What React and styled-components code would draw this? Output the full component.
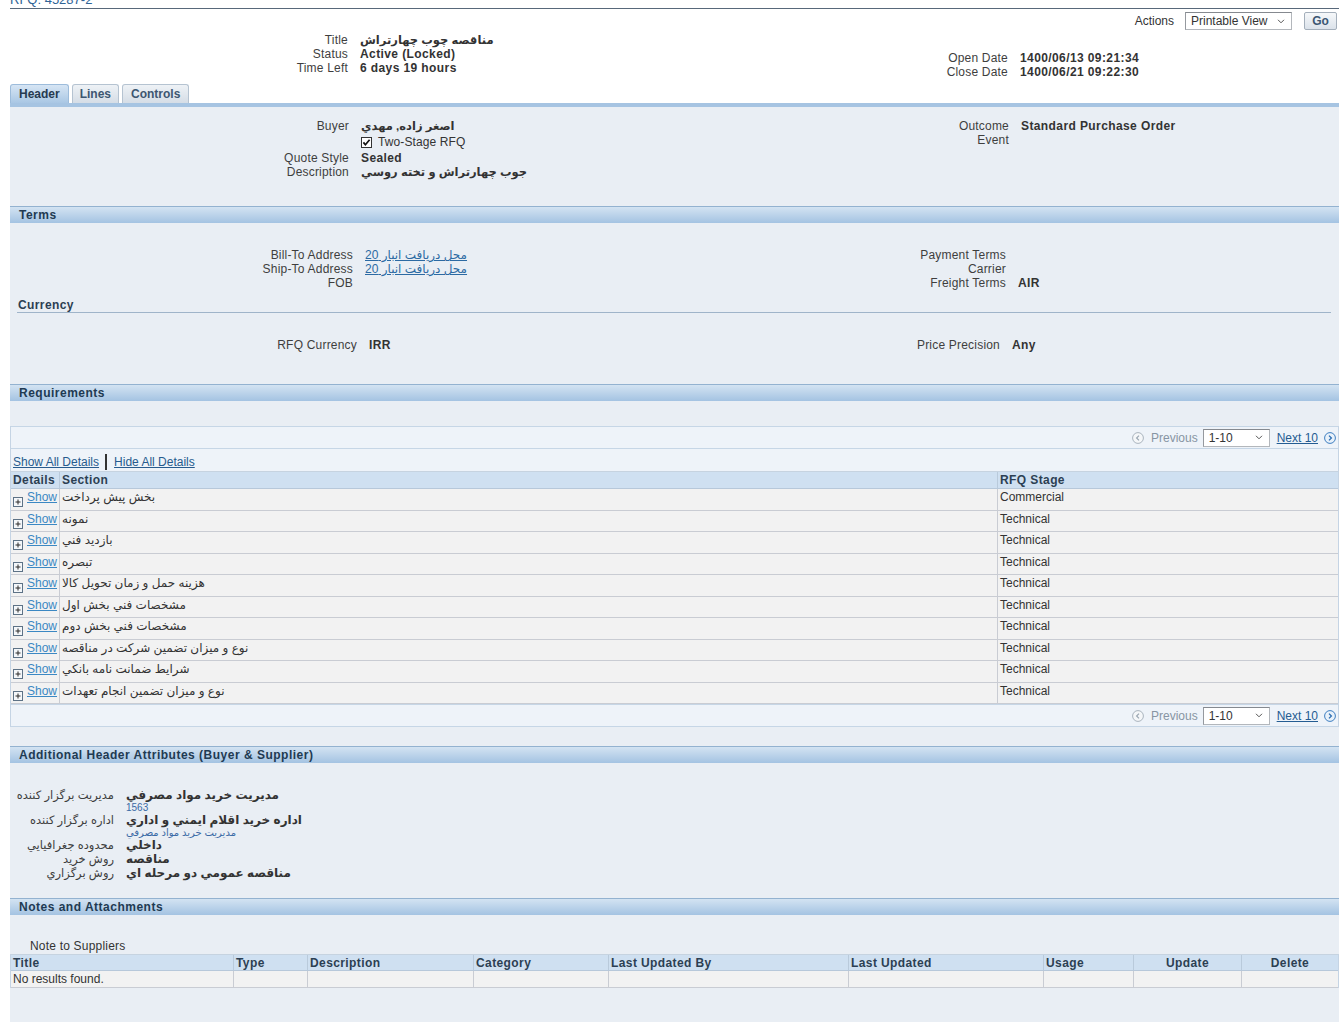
import React from "react";
import styled, { createGlobalStyle } from "styled-components";

const GlobalStyle = createGlobalStyle`
  html, body { margin: 0; padding: 0; background: #ffffff; }
  body {
    font-family: "Liberation Sans", "DejaVu Sans", Arial, sans-serif;
    font-size: 12px;
    color: #333;
    overflow: hidden;
  }
`;

const Fa = styled.span`
  letter-spacing: 0;
  font-size: ${(p) => (p.$size ? `${p.$size}px` : "inherit")};
`;

const Page = styled.div`
  width: 1329px;
  margin-left: 10px;
`;

const PageTitle = styled.div`
  margin-top: -8px;
  height: 17px;
  box-sizing: border-box;
  border-bottom: 1px solid #58687a;
  font-size: 13px;
  line-height: 16px;
  color: #2f6497;
`;

const ActionsBar = styled.div`
  display: flex;
  justify-content: flex-end;
  align-items: center;
  height: 18px;
  margin-top: 3px;
  padding-right: 2px;
`;

const ActionsLabel = styled.span`
  color: #333;
  margin-right: 11px;
`;

const SelectBox = styled.div`
  display: flex;
  align-items: center;
  justify-content: space-between;
  width: ${(p) => p.$w}px;
  height: 18px;
  box-sizing: border-box;
  border: 1px solid #b3b7bc;
  border-top-color: #85898f;
  border-left-color: #95999f;
  background: #fff;
  padding: 0 6px 0 5px;
  color: #333;
  font-size: 12px;
  margin: 0 ${(p) => p.$mr || 0}px 0 ${(p) => p.$ml || 0}px;
`;

const GoButton = styled.div`
  margin-left: 12px;
  width: 33px;
  height: 18px;
  box-sizing: border-box;
  border: 1px solid #a4afbb;
  border-radius: 2px;
  background: linear-gradient(#f6f8fa, #dbe2ea);
  font-weight: bold;
  font-size: 12px;
  line-height: 16px;
  text-align: center;
  color: #3b5672;
`;

const TwoCol = styled.div`
  display: flex;
  padding-top: ${(p) => p.$top || 0}px;
  padding-bottom: ${(p) => p.$bottom || 0}px;
  margin-top: ${(p) => p.$mt || 0}px;
`;

const Col = styled.div`
  width: ${(p) => (p.$w ? `${p.$w}px` : "auto")};
  flex: ${(p) => (p.$w ? "none" : "1")};
  padding-top: ${(p) => p.$offset || 0}px;
`;

const Fields = styled.div`
  display: grid;
  grid-template-columns: ${(p) => p.$label}px max-content;
  column-gap: 12px;
  line-height: 14px;
  align-content: start;
`;

const Label = styled.div`
  text-align: right;
  color: #3e3e3e;
  white-space: nowrap;
  height: 14px;
  letter-spacing: 0.2px;
`;

const Value = styled.div`
  font-weight: bold;
  color: #333;
  white-space: nowrap;
  height: 14px;
  letter-spacing: 0.4px;
`;

const CheckValue = styled.div`
  display: flex;
  align-items: center;
  gap: 6px;
  height: 18px;
  color: #333;
  letter-spacing: 0.1px;
`;

const SubNote = styled.div`
  grid-column: 2;
  font-size: 10px;
  line-height: 11px;
  height: 11px;
  color: #3a6aa6;
  white-space: nowrap;
`;

const AddrLink = styled.a`
  color: #2c6aa3;
  text-decoration: underline;
  font-weight: normal;
  letter-spacing: 0;
`;

const TabBar = styled.div`
  display: flex;
  align-items: flex-end;
  gap: 3px;
  margin-top: 5px;
  height: 19px;
  border-bottom: 4px solid #a6c4e2;
`;

const Tab = styled.div`
  height: 19px;
  box-sizing: border-box;
  padding: 0 ${(p) => p.$pad || 8}px;
  line-height: 18px;
  font-weight: bold;
  border: 1px solid ${(p) => (p.$active ? "#9dbcdb" : "#b5c3d1")};
  border-bottom: none;
  border-radius: 3px 3px 0 0;
  background: ${(p) =>
    p.$active
      ? "linear-gradient(#d6e5f4, #a9c7e4)"
      : "linear-gradient(#eef2f6, #d5dde6)"};
  color: ${(p) => (p.$active ? "#263a50" : "#3d5671")};
`;

const Content = styled.div`
  background: #e9eef4;
`;

const Section = styled.div`
  padding-top: ${(p) => p.$top}px;
  padding-bottom: ${(p) => p.$bottom}px;
`;

const SectionBar = styled.div`
  height: 17px;
  box-sizing: border-box;
  border-top: 1px solid #93b2d0;
  background: linear-gradient(#d3e3f2, #a4c3e2);
  padding-left: 9px;
  line-height: 16px;
  font-weight: bold;
  letter-spacing: 0.5px;
  color: #213a52;
`;

const SubHeader = styled.div`
  margin: 7px 8px 0 7px;
  padding: 1px 0 0 1px;
  line-height: 14px;
  font-weight: bold;
  letter-spacing: 0.4px;
  color: #2c3e52;
  border-bottom: 1px solid #9fb4c9;
`;

const TableBox = styled.div`
  background: #eef3f9;
  border-left: 1px solid #c5d4e4;
  border-right: 1px solid #c5d4e4;
`;

const PagerRow = styled.div`
  display: flex;
  justify-content: flex-end;
  align-items: center;
  height: 23px;
  box-sizing: border-box;
  border-top: 1px solid #c6d6e6;
  border-bottom: 1px solid #c6d6e6;
  padding-right: 2px;
  color: #8795a3;
`;

const PagerText = styled.span`
  margin-left: 7px;
`;

const PagerLink = styled.a`
  color: #245c92;
  text-decoration: underline;
  margin-right: 6px;
`;

const DetailLinks = styled.div`
  display: flex;
  align-items: center;
  height: 22px;
  padding: 4px 0 0 2px;
  box-sizing: border-box;
`;

const PlainLink = styled.a`
  color: #275b8e;
  text-decoration: underline;
`;

const LinkSep = styled.span`
  display: inline-block;
  width: 2px;
  height: 16px;
  background: #333;
  margin: 0 7px 0 6px;
`;

const GridRow = styled.div`
  display: grid;
  grid-template-columns: ${(p) => p.$cols};
  height: ${(p) => p.$h}px;
  box-sizing: border-box;
  background: ${(p) => (p.$head ? "#cfe0f1" : "#f2f2f2")};
  border-bottom: 1px solid ${(p) => (p.$head ? "#b7c8da" : "#c9ccd3")};
  border-top: ${(p) => (p.$top ? "1px solid #c6d3e0" : "none")};
`;

const Cell = styled.div`
  padding: 1px 2px 0;
  line-height: 14px;
  white-space: nowrap;
  overflow: hidden;
  text-align: ${(p) => p.$align || "left"};
  font-weight: ${(p) => (p.$head ? "bold" : "normal")};
  letter-spacing: ${(p) => (p.$head ? "0.4px" : "0")};
  color: ${(p) => (p.$head ? "#2c3f53" : "#333")};
  border-right: ${(p) =>
    p.$last ? "none" : `1px solid ${p.$head ? "#b9cadb" : "#c9ccd3"}`};
  display: ${(p) => (p.$flex ? "flex" : "block")};
  align-items: flex-start;
`;

const ShowLink = styled.a`
  color: #3b88c3;
  text-decoration: underline;
  margin-left: 4px;
`;

const PlusWrap = styled.span`
  display: inline-flex;
  margin-top: 7px;
`;

const NoteLabel = styled.div`
  padding-left: 20px;
  line-height: 14px;
  color: #333;
  height: 15px;
  letter-spacing: 0.2px;
`;

const NotesBox = styled.div`
  border-left: 1px solid #c5d4e4;
  border-right: 1px solid #c5d4e4;
`;

/* ---------- icons ---------- */

const Chevron = () => (
  <svg width="8" height="5" viewBox="0 0 8 5">
    <path d="M1 0.8 L4 3.8 L7 0.8" fill="none" stroke="#555" strokeWidth="1" />
  </svg>
);

const CheckIcon = () => (
  <svg width="11" height="11" viewBox="0 0 11 11">
    <rect x="0.5" y="0.5" width="10" height="10" fill="#fff" stroke="#333" />
    <path d="M2.4 5.4 L4.4 7.8 L8.6 2.8" fill="none" stroke="#111" strokeWidth="1.7" />
  </svg>
);

const PlusIcon = () => (
  <svg width="10" height="10" viewBox="0 0 10 10">
    <rect x="0.5" y="0.5" width="9" height="9" fill="#f4f7fa" stroke="#5d7286" />
    <path d="M2.5 5 H7.5 M5 2.5 V7.5" stroke="#2a2a2a" strokeWidth="1" />
  </svg>
);

const PrevIcon = () => (
  <svg width="12" height="12" viewBox="0 0 12 12">
    <circle cx="6" cy="6" r="5.4" fill="#f5f7f9" stroke="#aab4be" />
    <path d="M7 3.6 L4.6 6 L7 8.4" fill="none" stroke="#9aa6b2" strokeWidth="1.2" />
  </svg>
);

const NextIcon = () => (
  <svg width="12" height="12" viewBox="0 0 12 12">
    <circle cx="6" cy="6" r="5.4" fill="#e8f1fa" stroke="#3e7ec0" />
    <path d="M5 3.6 L7.4 6 L5 8.4" fill="none" stroke="#2b6db2" strokeWidth="1.3" />
  </svg>
);

/* ---------- data ---------- */

const requirements = [
  ["بخش پيش پرداخت", "Commercial"],
  ["نمونه", "Technical"],
  ["بازديد فني", "Technical"],
  ["تبصره", "Technical"],
  ["هزينه حمل و زمان تحويل كالا", "Technical"],
  ["مشخصات فني بخش اول", "Technical"],
  ["مشخصات فني بخش دوم", "Technical"],
  ["نوع و ميزان تضمين شركت در مناقصه", "Technical"],
  ["شرايط ضمانت نامه بانكي", "Technical"],
  ["نوع و ميزان تضمين انجام تعهدات", "Technical"],
];

const attributes = [
  ["مديريت برگزار كننده", "مديريت خريد مواد مصرفي", "1563"],
  ["اداره برگزار كننده", "اداره خريد اقلام ايمني و اداري", "مديريت خريد مواد مصرفي"],
  ["محدوده جغرافيايي", "داخلي"],
  ["روش خريد", "مناقصه"],
  ["روش برگزاري", "مناقصه عمومي دو مرحله اي"],
];

const noteCols = [
  ["Title", 223, "left"],
  ["Type", 74, "left"],
  ["Description", 166, "left"],
  ["Category", 135, "left"],
  ["Last Updated By", 240, "left"],
  ["Last Updated", 195, "left"],
  ["Usage", 90, "left"],
  ["Update", 108, "center"],
  ["Delete", 95, "center"],
];

const reqCols = "49px 938px 1fr";
const notesGrid = noteCols
  .map((c, i) => (i === noteCols.length - 1 ? "1fr" : `${c[1]}px`))
  .join(" ");

function Pager() {
  return (
    <PagerRow>
      <PrevIcon />
      <PagerText>Previous</PagerText>
      <SelectBox $w={67} $ml={5} $mr={7}>
        <span>1-10</span>
        <Chevron />
      </SelectBox>
      <PagerLink>Next 10</PagerLink>
      <NextIcon />
    </PagerRow>
  );
}

export default function App() {
  return (
    <>
      <GlobalStyle />
      <Page>
        <PageTitle>RFQ: 45287-2</PageTitle>

        <ActionsBar>
          <ActionsLabel>Actions</ActionsLabel>
          <SelectBox $w={107}>
            <span>Printable View</span>
            <Chevron />
          </SelectBox>
          <GoButton>Go</GoButton>
        </ActionsBar>

        <TwoCol $mt={3}>
          <Col $w={660}>
            <Fields $label={338}>
              <Label>Title</Label>
              <Value>
                <Fa $size={11.5}>مناقصه چوب چهارتراش</Fa>
              </Value>
              <Label>Status</Label>
              <Value>Active (Locked)</Value>
              <Label>Time Left</Label>
              <Value>6 days 19 hours</Value>
            </Fields>
          </Col>
          <Col $offset={18}>
            <Fields $label={338}>
              <Label>Open Date</Label>
              <Value>1400/06/13 09:21:34</Value>
              <Label>Close Date</Label>
              <Value>1400/06/21 09:22:30</Value>
            </Fields>
          </Col>
        </TwoCol>

        <TabBar>
          <Tab $active>Header</Tab>
          <Tab $pad={7}>Lines</Tab>
          <Tab>Controls</Tab>
        </TabBar>

        <Content>
          <TwoCol $top={12} $bottom={27}>
            <Col $w={660}>
              <Fields $label={339}>
                <Label>Buyer</Label>
                <Value>
                  <Fa $size={11.5}>اصغر زاده, مهدي</Fa>
                </Value>
                <Label />
                <CheckValue>
                  <CheckIcon />
                  <span>Two-Stage RFQ</span>
                </CheckValue>
                <Label>Quote Style</Label>
                <Value>Sealed</Value>
                <Label>Description</Label>
                <Value>
                  <Fa $size={11.5}> جوب چهارتراش و تخته روسي</Fa>
                </Value>
              </Fields>
            </Col>
            <Col>
              <Fields $label={339}>
                <Label>Outcome</Label>
                <Value>Standard Purchase Order</Value>
                <Label>Event</Label>
                <Value />
              </Fields>
            </Col>
          </TwoCol>

          <SectionBar>Terms</SectionBar>
          <TwoCol $top={25}>
            <Col $w={660}>
              <Fields $label={343}>
                <Label>Bill-To Address</Label>
                <Value>
                  <AddrLink>محل دريافت انبار 20</AddrLink>
                </Value>
                <Label>Ship-To Address</Label>
                <Value>
                  <AddrLink>محل دريافت انبار 20</AddrLink>
                </Value>
                <Label>FOB</Label>
                <Value />
              </Fields>
            </Col>
            <Col>
              <Fields $label={336}>
                <Label>Payment Terms</Label>
                <Value />
                <Label>Carrier</Label>
                <Value />
                <Label>Freight Terms</Label>
                <Value>AIR</Value>
              </Fields>
            </Col>
          </TwoCol>
          <SubHeader>Currency</SubHeader>
          <TwoCol $top={25} $bottom={32}>
            <Col $w={660}>
              <Fields $label={347}>
                <Label>RFQ Currency</Label>
                <Value>IRR</Value>
              </Fields>
            </Col>
            <Col>
              <Fields $label={330}>
                <Label>Price Precision</Label>
                <Value>Any</Value>
              </Fields>
            </Col>
          </TwoCol>

          <SectionBar>Requirements</SectionBar>
          <Section $top={25} $bottom={19}>
            <TableBox>
              <Pager />
              <DetailLinks>
                <PlainLink>Show All Details</PlainLink>
                <LinkSep />
                <PlainLink>Hide All Details</PlainLink>
              </DetailLinks>
              <GridRow $cols={reqCols} $h={18} $head $top>
                <Cell $head>Details</Cell>
                <Cell $head>Section</Cell>
                <Cell $head $last>
                  RFQ Stage
                </Cell>
              </GridRow>
              {requirements.map(([section, stage], i) => (
                <GridRow key={i} $cols={reqCols} $h={21.5}>
                  <Cell $flex>
                    <PlusWrap>
                      <PlusIcon />
                    </PlusWrap>
                    <ShowLink>Show</ShowLink>
                  </Cell>
                  <Cell>{section}</Cell>
                  <Cell $last>{stage}</Cell>
                </GridRow>
              ))}
              <Pager />
            </TableBox>
          </Section>

          <SectionBar>Additional Header Attributes (Buyer &amp; Supplier)</SectionBar>
          <Section $top={25} $bottom={18}>
            <Fields $label={104}>
              {attributes.map(([label, value, note]) => (
                <React.Fragment key={label}>
                  <Label>
                    <Fa $size={11.5}>{label}</Fa>
                  </Label>
                  <Value>
                    <Fa $size={12}>{value}</Fa>
                  </Value>
                  {note && <SubNote>{note}</SubNote>}
                </React.Fragment>
              ))}
            </Fields>
          </Section>

          <SectionBar>Notes and Attachments</SectionBar>
          <Section $top={24} $bottom={34}>
            <NoteLabel>Note to Suppliers</NoteLabel>
            <NotesBox>
              <GridRow $cols={notesGrid} $h={17} $head $top>
                {noteCols.map(([t, , a], i) => (
                  <Cell key={t} $head $align={a} $last={i === noteCols.length - 1}>
                    {t}
                  </Cell>
                ))}
              </GridRow>
              <GridRow $cols={notesGrid} $h={17}>
                {noteCols.map(([t], i) => (
                  <Cell key={t} $last={i === noteCols.length - 1}>
                    {i === 0 ? "No results found." : ""}
                  </Cell>
                ))}
              </GridRow>
            </NotesBox>
          </Section>
        </Content>
      </Page>
    </>
  );
}
